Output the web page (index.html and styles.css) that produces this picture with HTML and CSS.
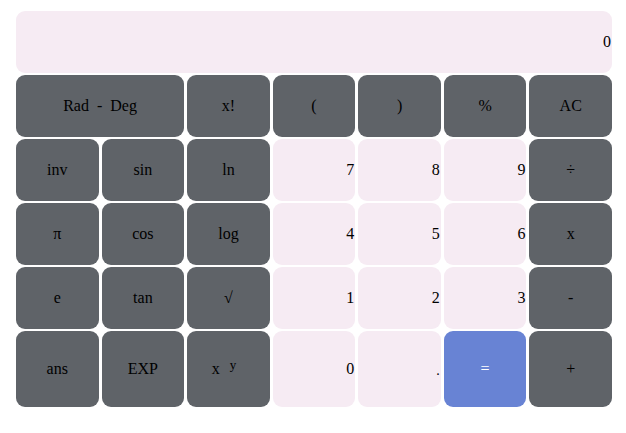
FILE: index.html
```html
<!DOCTYPE html>
<html lang="en">
<head>
<meta charset="utf-8">
<title>Calculator</title>
<link rel="stylesheet" href="styles.css">
</head>
<body>
<div class="calc">
  <div class="display">0</div>
  <div class="keys">
    <button class="key fn wide">Rad&nbsp;&nbsp;-&nbsp;&nbsp;Deg</button>
    <button class="key fn">x!</button>
    <button class="key fn">(</button>
    <button class="key fn">)</button>
    <button class="key fn">%</button>
    <button class="key fn">AC</button>

    <button class="key fn">inv</button>
    <button class="key fn">sin</button>
    <button class="key fn">ln</button>
    <button class="key num">7</button>
    <button class="key num">8</button>
    <button class="key num">9</button>
    <button class="key fn">÷</button>

    <button class="key fn">π</button>
    <button class="key fn">cos</button>
    <button class="key fn">log</button>
    <button class="key num">4</button>
    <button class="key num">5</button>
    <button class="key num">6</button>
    <button class="key fn">x</button>

    <button class="key fn">e</button>
    <button class="key fn">tan</button>
    <button class="key fn">√</button>
    <button class="key num">1</button>
    <button class="key num">2</button>
    <button class="key num">3</button>
    <button class="key fn">-</button>

    <button class="key fn">ans</button>
    <button class="key fn">EXP</button>
    <button class="key fn pow"><span>x</span><sup class="sup">y</sup></button>
    <button class="key num">0</button>
    <button class="key num dot">.</button>
    <button class="key eq">=</button>
    <button class="key fn">+</button>
  </div>
</div>
</body>
</html>
```
FILE: styles.css
```css
html, body {
  margin: 0;
  padding: 0;
  background: #ffffff;
}

body {
  font-family: "Liberation Serif", "Times New Roman", serif;
  font-size: 16px;
  color: #000;
}

.calc {
  padding: 11px 14px 0 16px;
}

.display {
  height: 61.5px;
  margin-bottom: 2.5px;
  background: #f6ebf3;
  border-radius: 9px;
  display: flex;
  align-items: center;
  justify-content: flex-end;
  padding-right: 1px;
  box-sizing: border-box;
}

.keys {
  display: grid;
  grid-template-columns: repeat(7, 1fr);
  grid-template-rows: repeat(4, 61.5px) 76px;
  column-gap: 3px;
  row-gap: 2.5px;
}

.key {
  border: none;
  margin: 0;
  padding: 0;
  font-family: inherit;
  font-size: 16px;
  color: #000;
  border-radius: 9px;
  display: flex;
  align-items: center;
  justify-content: center;
}

.fn {
  background: #5f6368;
}

.wide {
  grid-column: span 2;
}

.num {
  background: #f6ebf3;
  justify-content: flex-end;
  padding-right: 1px;
}

.dot {
  font-size: 14px;
  padding-top: 4px;
}

.eq {
  background: #6883d4;
  color: #ffffff;
}

.pow {
  padding-right: 9px;
}

.sup {
  font-size: 13px;
  margin-left: 10px;
  position: relative;
  top: -4px;
}
```
